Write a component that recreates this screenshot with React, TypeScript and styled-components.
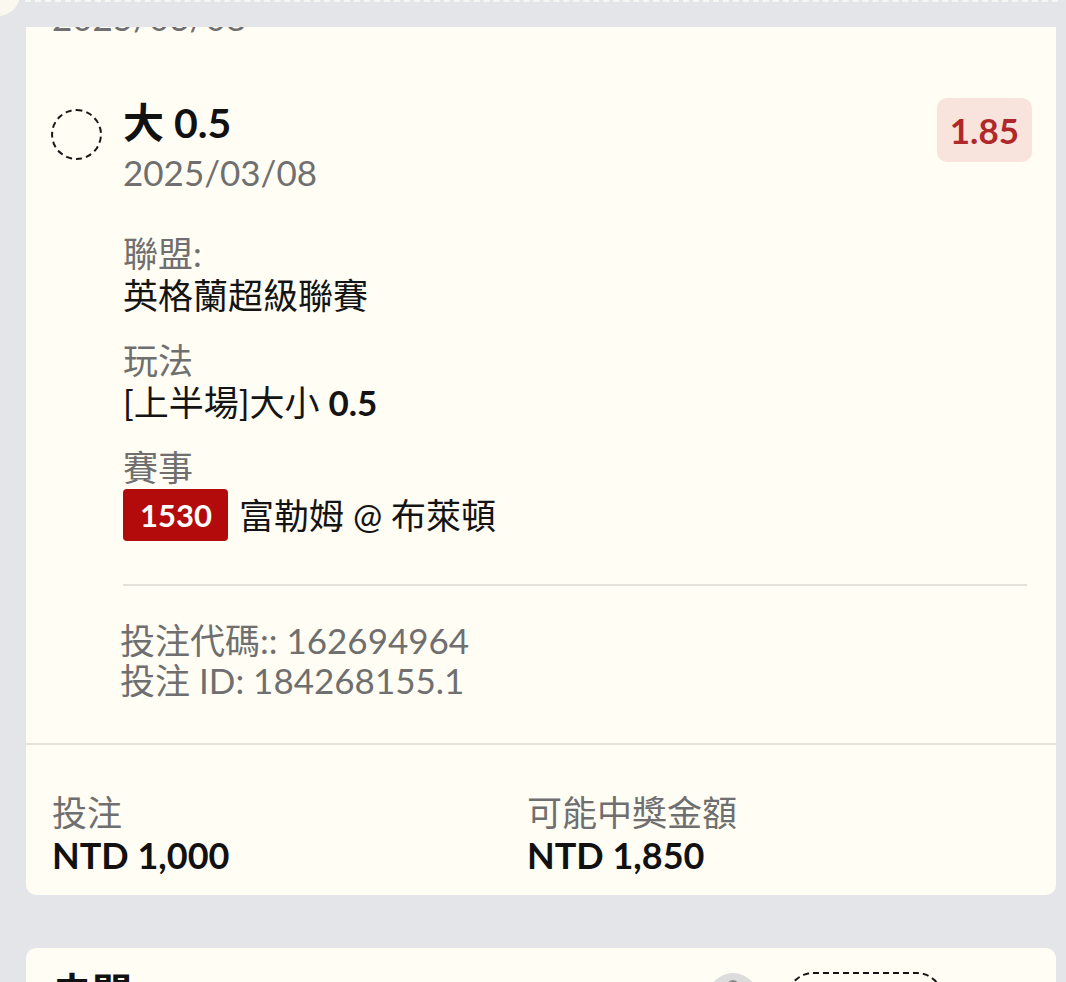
import styled, { createGlobalStyle } from "styled-components";

const GlobalStyle = createGlobalStyle`
  html, body {
    margin: 0;
    padding: 0;
    background: #e4e5e9;
  }
  body {
    font-family: Lato, "Noto Sans CJK TC", sans-serif;
    color: #141414;
  }
`;

const Page = styled.div`
  width: 1066px;
  height: 982px;
  overflow: hidden;
  display: flex;
  flex-direction: column;
  background: #e4e5e9;
`;

const TopBar = styled.div`
  flex: none;
  height: 27px;
  position: relative;
  z-index: 1;
  background: #e4e5e9;
  overflow: hidden;
`;

// bottom edge of the dashed chip sitting above the viewport
const DashedEdge = styled.div`
  position: absolute;
  left: 25px;
  right: 8px;
  top: -20px;
  height: 20px;
  border-bottom: 2px dashed #f6f6f4;
`;

const CornerBlob = styled.div`
  position: absolute;
  left: -24px;
  top: -28px;
  width: 44px;
  height: 44px;
  border-radius: 50%;
  background: #fbf9ef;
`;

const Scroller = styled.div`
  flex: 1;
  overflow: hidden;
  padding: 0 10px 0 26px;
`;

const Card = styled.div<{ $cut?: "top" | "bottom" }>`
  background: #fffdf4;
  border-radius: ${(p) => (p.$cut === "top" ? "0 0 10px 10px" : "10px 10px 0 0")};
`;

const PrevDate = styled.div`
  margin-top: -32px;
  padding-left: 26px;
  font-size: 35px;
  line-height: 44px;
  color: #6f6f6f;
`;

const BetRow = styled.div`
  display: flex;
  align-items: flex-start;
  margin-top: 59px;
  padding: 0 24px 0 25px;
`;

const Radio = styled.div`
  flex: none;
  width: 51px;
  height: 51px;
  margin-top: 11px;
  box-sizing: border-box;
  border: 2.5px dashed #151515;
  border-radius: 50%;
`;

const Main = styled.div`
  flex: 1;
  margin-left: 21px;
  padding-bottom: 43px;
`;

const TopLine = styled.div`
  display: flex;
  justify-content: space-between;
  align-items: flex-start;
`;

const Title = styled.div`
  font-size: 41px;
  line-height: 50px;
  font-weight: 700;
  color: #111;
`;

const DateText = styled.div`
  margin-top: 2px;
  font-size: 35px;
  line-height: 44px;
  color: #6f6f6f;
`;

const Odds = styled.div`
  height: 64px;
  padding: 0 13px;
  display: flex;
  align-items: center;
  border-radius: 10px;
  background: #f9e4dd;
  color: #b0292a;
  font-size: 35px;
  font-weight: 700;
`;

const Details = styled.div`
  margin-top: 38px;
  display: flex;
  flex-direction: column;
  gap: 23px;
`;

const Group = styled.div``;

const Label = styled.div`
  font-size: 35px;
  line-height: 42px;
  color: #6f6f6f;
`;

const Value = styled.div`
  font-size: 35px;
  line-height: 42px;
  color: #141414;

  b {
    font-weight: 700;
  }
`;

const MatchLine = styled.div`
  display: flex;
  align-items: center;
  gap: 11px;
  margin-top: 1px;
  font-size: 35px;
  line-height: 52px;
  color: #141414;
`;

const MatchNo = styled.span`
  height: 52px;
  padding: 0 16px 0 17px;
  display: inline-flex;
  align-items: center;
  border-radius: 4px;
  background: #b30b0b;
  color: #fff;
  font-size: 31px;
  font-weight: 700;
`;

const Divider = styled.div`
  height: 2px;
  margin: 43px 5px 0 0;
  background: #e4e1da;
`;

const Ids = styled.div`
  margin: 34px 0 0 -3px;
  font-size: 35px;
  line-height: 40px;
  color: #6f6f6f;
`;

const Footer = styled.div`
  border-top: 2px solid #e6e3dc;
  padding: 46px 26px 18px 26px;
  display: grid;
  grid-template-columns: 475px 1fr;
`;

const Amount = styled.div`
  font-size: 36px;
  line-height: 44px;
  font-weight: 700;
  color: #111;
`;

const NextCard = styled(Card)`
  margin-top: 53px;
  padding: 19px 26px 0 26px;
  display: flex;
  align-items: flex-start;
`;

const NextTitle = styled.div`
  flex: 1;
  font-size: 40px;
  line-height: 50px;
  font-weight: 700;
  color: #111;
`;

const IconButton = styled.div`
  flex: none;
  width: 50px;
  height: 50px;
  margin-top: 6px;
  border-radius: 50%;
  background: #dcdcdc;
  display: flex;
  justify-content: center;
  padding-top: 7px;
  box-sizing: border-box;
`;

const IconDot = styled.div`
  width: 12px;
  height: 12px;
  border-radius: 50%;
  background: #8a8a8a;
`;

const DashedPill = styled.div`
  flex: none;
  width: 156px;
  height: 60px;
  margin: 5px 87px 0 29px;
  box-sizing: border-box;
  border: 2px dashed #151515;
  border-radius: 26px;
`;

export default function App() {
  return (
    <>
      <GlobalStyle />
      <Page>
        <TopBar>
          <CornerBlob />
          <DashedEdge />
        </TopBar>
        <Scroller>
          <Card $cut="top">
            <PrevDate>2025/03/08</PrevDate>
            <BetRow>
              <Radio />
              <Main>
                <TopLine>
                  <div>
                    <Title>大 0.5</Title>
                    <DateText>2025/03/08</DateText>
                  </div>
                  <Odds>1.85</Odds>
                </TopLine>
                <Details>
                  <Group>
                    <Label>聯盟:</Label>
                    <Value>英格蘭超級聯賽</Value>
                  </Group>
                  <Group>
                    <Label>玩法</Label>
                    <Value>
                      [上半場]大小 <b>0.5</b>
                    </Value>
                  </Group>
                  <Group>
                    <Label>賽事</Label>
                    <MatchLine>
                      <MatchNo>1530</MatchNo>
                      <span>富勒姆 @ 布萊頓</span>
                    </MatchLine>
                  </Group>
                </Details>
                <Divider />
                <Ids>
                  <div>投注代碼:: 162694964</div>
                  <div>投注 ID: 184268155.1</div>
                </Ids>
              </Main>
            </BetRow>
            <Footer>
              <div>
                <Label>投注</Label>
                <Amount>NTD 1,000</Amount>
              </div>
              <div>
                <Label>可能中獎金額</Label>
                <Amount>NTD 1,850</Amount>
              </div>
            </Footer>
          </Card>
          <NextCard>
            <NextTitle>未開</NextTitle>
            <IconButton>
              <IconDot />
            </IconButton>
            <DashedPill />
          </NextCard>
        </Scroller>
      </Page>
    </>
  );
}
